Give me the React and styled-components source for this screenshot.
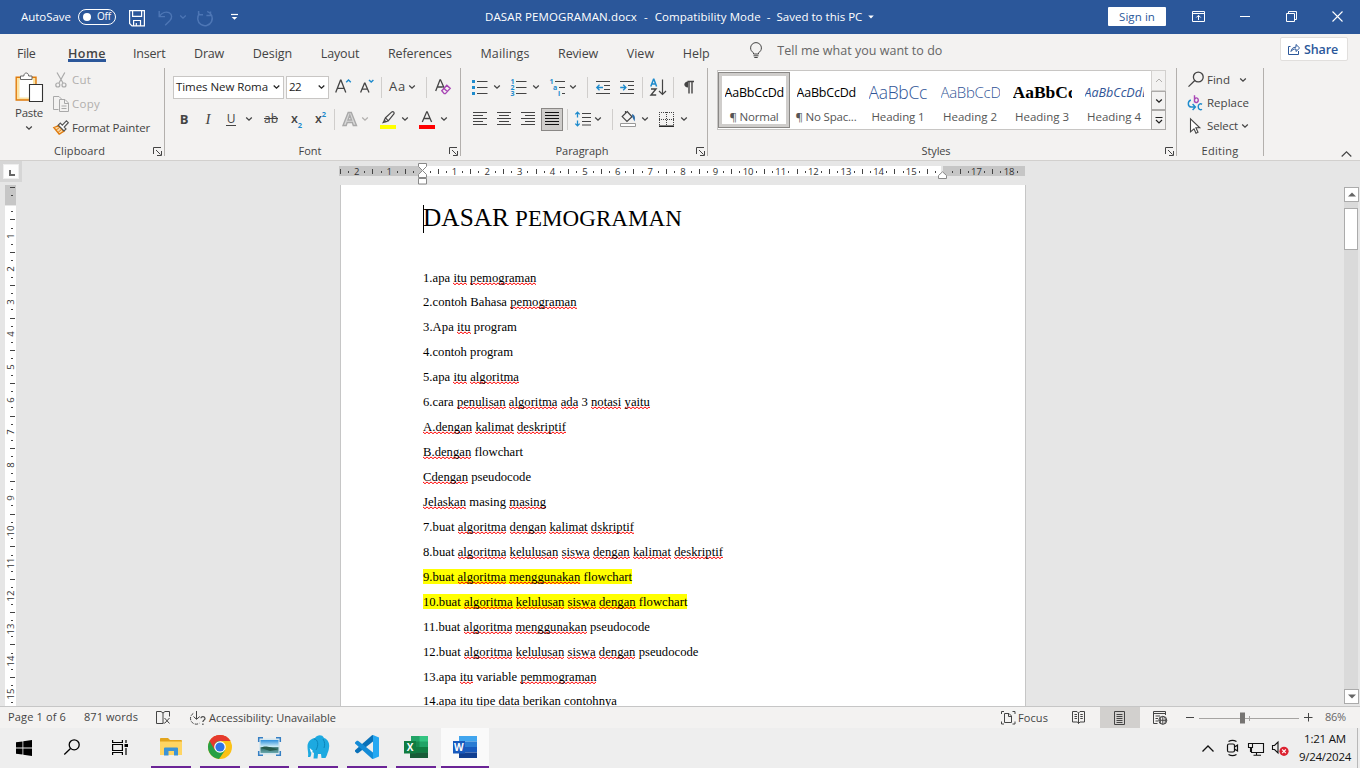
import React, { useLayoutEffect, useRef } from "react";
import styled, { createGlobalStyle, css } from "styled-components";

const Global = createGlobalStyle`
  *, *::before, *::after { box-sizing: border-box; }
  body { margin: 0; overflow: hidden; background: #e6e6e6; }
  #root { font-family: "Open Sans", "Noto Sans", sans-serif; color: #444; }
`;

const INK = "#444444";
const BLUE = "#2b579a";
const SKY = "#1e8bcd";

/* ---------- text ---------- */
const Run = styled.span`
  display: inline-block;
  flex: none;
  white-space: pre;
  line-height: 1.36;
  font-size: ${(p) => p.$size || 11.5}px;
  font-weight: ${(p) => p.$weight || 400};
  color: ${(p) => p.$color || "inherit"};
  margin-left: ${(p) => p.$ml || 0}px;
  margin-top: ${(p) => p.$mt || 0}px;
`;

/* Tracks its letters so that the run takes the given width. */
function Text({ w, children, ...rest }) {
  const ref = useRef(null);
  useLayoutEffect(() => {
    const el = ref.current;
    if (!w || !el) return;
    el.style.letterSpacing = "0px";
    const natural = el.getBoundingClientRect().width;
    el.style.letterSpacing = (w - natural) / el.textContent.length + "px";
  }, [w, children]);
  return <Run ref={ref} {...rest}>{children}</Run>;
}

/* ---------- shell ---------- */
const Window = styled.div`
  width: 1360px;
  height: 768px;
  display: flex;
  flex-direction: column;
  overflow: hidden;
`;
const Svg = styled.svg`
  display: block;
  flex: none;
  overflow: visible;
  margin-left: ${(p) => p.$ml || 0}px;
  margin-top: ${(p) => p.$mt || 0}px;
`;
function Icon({ w = 16, h = 16, children, ml, mt, ...rest }) {
  return (
    <Svg width={w} height={h} viewBox={`0 0 ${w} ${h}`} fill="none" stroke={INK} $ml={ml} $mt={mt} {...rest}>
      {children}
    </Svg>
  );
}
const Chevron = ({ ml, color = INK, w = 14, mt }) => (
  <Icon w={w} h={8} ml={ml} mt={mt} stroke={color} strokeWidth="1.3">
    <path d={`M${w / 2 - 2.8} 2.6L${w / 2} 5.2L${w / 2 + 2.8} 2.6`} />
  </Icon>
);

/* ---------- title bar ---------- */
const TitleBar = styled.header`
  height: 34px;
  flex: none;
  display: flex;
  align-items: center;
  background: ${BLUE};
  color: #fff;
`;
const TitleLeft = styled.div`
  width: 485px;
  display: flex;
  align-items: center;
  padding-left: 21px;
  height: 33px;
`;
const Toggle = styled.div`
  width: 38px;
  height: 16px;
  margin-left: 7px;
  border: 1px solid #fff;
  border-radius: 8px;
  display: flex;
  align-items: center;
  padding-left: 4px;
`;
const Knob = styled.i`
  width: 8px;
  height: 8px;
  border-radius: 50%;
  background: #fff;
`;
const TitleText = styled.div`
  flex: 1;
  display: flex;
  align-items: center;
  height: 33px;
`;
const SignIn = styled.button`
  width: 58px;
  height: 19px;
  margin: 0 26px 1px 0;
  padding: 0;
  border: 0;
  border-radius: 1px;
  background: #fff;
  color: ${BLUE};
  font: inherit;
  display: flex;
  align-items: center;
  justify-content: center;
`;
const WindowButtons = styled.div`
  display: flex;
  align-items: center;
  width: 168px;
`;

function TitleBarView() {
  return (
    <TitleBar>
      <TitleLeft>
        <Text w={50}>AutoSave</Text>
        <Toggle><Knob /><Text w={14} $size={10} $ml={6}>Off</Text></Toggle>
        <Icon w={16} h={17} ml={13} mt={2} stroke="#fff" strokeWidth="1.2">
          <path d="M.6 .6H15.4V15.9H3L.6 13.5Z M3.6 .6V6.4H12.6V.6 M4.6 15.9V10.5H11.5V15.9 M7.3 13V16" />
        </Icon>
        <Icon ml={13} mt={1} stroke="#4d76b5" strokeWidth="1.4">
          <path d="M1.2 1V6.6H7 M1.4 6.4C4 2.5 8 1.4 11 2.7C14.4 4.3 14.2 8 12 10.4L7.2 15.2" />
        </Icon>
        <Chevron ml={2} color="#4d76b5" />
        <Icon w={17} ml={7} mt={1} stroke="#4d76b5" strokeWidth="1.5">
          <path d="M2.6 3.4A7.3 7.3 0 1 0 10.2 1.4 M1.6 1V4.8H6 M13.5 1.4V5.5H9.4" />
        </Icon>
        <Icon w={9} h={8} ml={16} stroke="#fff" strokeWidth="1.2">
          <path d="M1 1.5H8" /><path d="M1.7 4H7.3L4.5 6.8Z" fill="#fff" stroke="none" />
        </Icon>
      </TitleLeft>
      <TitleText>
        <Text w={152}>DASAR PEMOGRAMAN.docx</Text>
        <Text $ml={7}>-</Text>
        <Text w={106} $ml={7}>Compatibility Mode</Text>
        <Text $ml={6}>-</Text>
        <Text w={86} $ml={6}>Saved to this PC</Text>
        <Icon w={6} h={4} ml={6} stroke="none" fill="#fff"><path d="M.2 .5H5.8L3 3.4Z" /></Icon>
      </TitleText>
      <SignIn><Text w={36}>Sign in</Text></SignIn>
      <WindowButtons>
        <Icon w={13} h={11} stroke="#fff" mt={-1}>
          <path d="M.5 .5H12.5V10.5H.5Z M.5 2.5H12.5 M6.5 9V4.5 M4.3 6.5L6.5 4.3L8.7 6.5" />
        </Icon>
        <Icon w={10} h={3} ml={35} mt={-1} stroke="#fff"><path d="M0 1.5H10" /></Icon>
        <Icon w={11} h={11} ml={36} mt={-1} stroke="#fff">
          <path d="M.5 2.5H8.5V10.5H.5Z M2.5 2.5V.5H10.5V8.5H8.5" />
        </Icon>
        <Icon w={11} h={11} ml={35} mt={-1} stroke="#fff" strokeWidth="1.1"><path d="M.5 .5L10.5 10.5M10.5 .5L.5 10.5" /></Icon>
      </WindowButtons>
    </TitleBar>
  );
}

/* ---------- tabs ---------- */
const TabBar = styled.nav`
  height: 34px;
  flex: none;
  display: flex;
  align-items: flex-start;
  padding-left: 17px;
  background: #f3f2f1;
`;
const Tab = styled.div`
  height: 28px;
  margin-right: ${(p) => p.$gap || 28.6}px;
  padding-top: 7px;
  border-bottom: 3px solid ${(p) => (p.$active ? BLUE : "transparent")};
`;
const TellMe = styled.div`
  flex: 1;
  display: flex;
  align-items: center;
  height: 32px;
  padding-left: 12px;
`;
const Share = styled.button`
  width: 68px;
  height: 24px;
  margin: 3px 12px 0 0;
  padding: 0 0 0 7px;
  display: flex;
  align-items: center;
  border: 1px solid #e1dfdd;
  border-radius: 2px;
  background: #fff;
  font: inherit;
  color: ${BLUE};
`;
const TABS = [
  ["File", 18.5, 32.5], ["Home", 38, 27], ["Insert", 32.5], ["Draw", 30], ["Design", 39.5], ["Layout", 38.5],
  ["References", 64], ["Mailings", 49], ["Review", 40], ["View", 27.5], ["Help", 27],
];

function Tabs() {
  return (
    <TabBar>
      {TABS.map(([t, w, gap]) => (
        <Tab key={t} $gap={gap} $active={t === "Home"}>
          <Text w={w} $size={12.5} $weight={t === "Home" ? 600 : 400}>{t}</Text>
        </Tab>
      ))}
      <TellMe>
        <Icon w={12} h={16}>
          <path d="M3.5 12V10.8C1.5 9.5 .6 8 .6 5.9A5.4 5.3 0 0 1 11.4 5.9C11.4 8 10.5 9.5 8.5 10.8V12Z M3.5 13.8H8.5 M4.3 15.5H7.7" />
        </Icon>
        <Text w={165} $size={12.5} $ml={15} $color="#666">Tell me what you want to do</Text>
      </TellMe>
      <Share>
        <Icon w={12} h={12} stroke={BLUE}>
          <path d="M2.5 3.5H.5V11.5H10.5V8 M3 8.5C3.3 5.8 5 4.2 8 4.2V1.5L11.6 5L8 8.5V6C5.6 6 4.2 6.6 3 8.5Z" />
        </Icon>
        <Text w={34} $size={12.5} $weight={600} $ml={4}>Share</Text>
      </Share>
    </TabBar>
  );
}

/* ---------- ribbon ---------- */
const Ribbon = styled.section`
  height: 93px;
  flex: none;
  display: flex;
  background: #f3f2f1;
  border-bottom: 1px solid #d2d0ce;
`;
const GroupBox = styled.div`
  width: ${(p) => p.$w}px;
  height: 88px;
  flex: none;
  display: flex;
  flex-direction: column;
  border-right: 1px solid #b3b0ad;
`;
const GroupBody = styled.div`
  height: 76px;
  flex: none;
`;
const GroupFooter = styled.div`
  height: 16px;
  display: flex;
  align-items: center;
  justify-content: center;
  padding-left: ${(p) => (p.$launcher ? 11 : 0)}px;
`;
const FooterTitle = styled.div`
  flex: 1;
  display: flex;
  justify-content: center;
  padding-right: ${(p) => p.$shift || 0}px;
`;
function Group({ w, title, tw, launcher = true, shift, children }) {
  return (
    <GroupBox $w={w}>
      <GroupBody>{children}</GroupBody>
      <GroupFooter $launcher={launcher}>
        <FooterTitle $shift={shift}><Text w={tw} $size={11}>{title}</Text></FooterTitle>
        {launcher && (
          <Icon w={9} h={9} mt={0} style={undefined}>
            <path d="M.5 7V.5H8 M3 3L7.5 7.5 M8.5 4V8.5H4" />
          </Icon>
        )}
        {launcher && <LauncherGap />}
      </GroupFooter>
    </GroupBox>
  );
}
const LauncherGap = styled.i`
  width: 2px;
`;
const ToolRow = styled.div`
  display: flex;
  align-items: center;
  height: ${(p) => p.$h || 24}px;
  margin-top: ${(p) => p.$mt || 0}px;
  padding-left: ${(p) => p.$pl || 0}px;
`;
const Cell = styled.div`
  width: ${(p) => p.$w}px;
  height: 20px;
  flex: none;
  margin-left: ${(p) => p.$ml || 0}px;
  display: flex;
  align-items: center;
  justify-content: center;
`;
const Divider = styled.i`
  width: 1px;
  height: 21px;
  flex: none;
  margin-left: ${(p) => p.$ml || 0}px;
  background: #d0cecc;
`;
const Combo = styled.div`
  width: ${(p) => p.$w}px;
  height: 23px;
  flex: none;
  margin-left: ${(p) => p.$ml || 0}px;
  display: flex;
  align-items: center;
  justify-content: space-between;
  padding-left: 2px;
  border: 1px solid #c8c6c4;
  background: #fff;
  color: #222;
`;
const ClipRow = styled.div`
  display: flex;
`;
const PasteButton = styled.div`
  width: 53px;
  display: flex;
  flex-direction: column;
  align-items: center;
  padding: 4px 0 0 5px;
`;
const ClipList = styled.div`
  display: flex;
  flex-direction: column;
`;
const ClipItem = styled.div`
  height: 24px;
  display: flex;
  align-items: center;
  color: ${(p) => (p.$off ? "#b1afad" : INK)};
`;

function Clipboard() {
  return (
    <Group w={165} title="Clipboard" tw={51} shift={5}>
      <ClipRow>
        <PasteButton>
          <Icon w={28} h={31}>
            <path d="M1.2 5.2H21V28H1.2Z" fill="#fbe3a4" stroke="#e07b0c" strokeWidth="1.4" />
            <path d="M4.5 7.5H18V25.5H4.5Z" fill="#fff" stroke="none" />
            <path d="M5.5 7.5V4H8.8C9 0 13.5 0 13.7 4H17V7.5Z" fill="#fff" stroke="#666" />
            <path d="M14.5 12.5H27.5V29.5H14.5Z" fill="#fff" stroke="#333" strokeWidth="1.1" />
          </Icon>
          <Text w={28} $mt={2}>Paste</Text>
          <Chevron mt={3} />
        </PasteButton>
        <ClipList>
          <ClipItem $off>
            <Icon ml={0} stroke="#aaa" strokeWidth="1.2">
              <path d="M4 .5L10 11 M11.8 .5L6 11" />
              <circle cx="4.8" cy="13" r="2" /><circle cx="11" cy="13" r="2" />
            </Icon>
            <Text w={19} $ml={3}>Cut</Text>
          </ClipItem>
          <ClipItem $off>
            <Icon stroke="#a9a9a9">
              <path d="M5.5 13.5H.5V.5H6L8.5 3 M6.5 3.5H12L15.5 7V15.5H6.5Z M11.5 3.5V7.5H15.5 M8.5 10H13.5 M8.5 12.5H13.5" />
            </Icon>
            <Text w={28} $ml={3}>Copy</Text>
          </ClipItem>
          <ClipItem>
            <Icon>
              <path d="M.8 7.5L6.2 14.2C8 13.5 9 12 10.8 11.3L5.5 5.3C4 6.5 2.5 7 .8 7.5Z" fill="#f7d7a8" stroke="#e07b0c" strokeWidth="1.3" />
              <path d="M3 10.2L7 7 M5 12.5L8.5 9.3" stroke="#e07b0c" />
              <path d="M5.3 5.2L7.3 3.2L9.3 5.2L13.4 .8L15.3 2.7L11.2 7.1L13 9L11 11Z" fill="#fff" stroke="#555" strokeWidth="1.2" />
            </Icon>
            <Text w={78} $ml={3}>Format Painter</Text>
          </ClipItem>
        </ClipList>
      </ClipRow>
    </Group>
  );
}

const Letter = styled.span`
  font-size: ${(p) => p.$size || 13}px;
  line-height: 1;
  font-weight: ${(p) => p.$weight || 400};
  font-style: ${(p) => (p.$italic ? "italic" : "normal")};
  font-family: ${(p) => (p.$serif ? '"Liberation Serif", serif' : "inherit")};
  color: ${(p) => p.$color || INK};
  ${(p) => p.$under && css`border-bottom: 1px solid ${INK}; padding: 0 1px;`}
  ${(p) => p.$strike && css`text-decoration: line-through;`}
`;
const Script = styled.span`
  align-self: ${(p) => (p.$low ? "flex-end" : "flex-start")};
  margin-top: ${(p) => (p.$low ? 0 : 1)}px;
  font-size: 7.5px;
  line-height: 8px;
  font-weight: 700;
  color: ${SKY};
`;
const ColorStack = styled.div`
  width: 16px;
  height: 18px;
  flex: none;
  display: flex;
  flex-direction: column;
  align-items: center;
  justify-content: space-between;
  border-bottom: 4px solid ${(p) => p.$color};
  margin-left: ${(p) => p.$ml || 0}px;
  margin-top: 1px;
`;

function FontGroup() {
  return (
    <Group w={296} title="Font" tw={23} shift={5}>
      <ToolRow $mt={7} $h={24} $pl={8}>
        <Combo $w={111}><Text w={92}>Times New Roma</Text><Chevron w={13} color="#222" /></Combo>
        <Combo $w={43} $ml={2}><Text w={12}>22</Text><Chevron w={13} color="#222" /></Combo>
        <Icon ml={6}>
          <path d="M.7 13.5L5.5 1.2H6L10.8 13.5 M2.4 9.3H9.1" strokeWidth="1.3" />
          <path d="M11.2 3.2L13.5 .9L15.8 3.2" stroke={SKY} strokeWidth="1.4" />
        </Icon>
        <Icon w={14} ml={9}>
          <path d="M.6 13.5L4.5 4.2H5L9 13.5 M2 10.2H7.5" strokeWidth="1.3" />
          <path d="M9 .9L11.2 3.1L13.4 .9" stroke={SKY} strokeWidth="1.4" />
        </Icon>
        <Divider $ml={7} />
        <Text w={17} $size={13} $ml={7}>Aa</Text>
        <Chevron ml={-1} />
        <Divider $ml={7} />
        <Icon ml={8}>
          <path d="M.7 12L5 .8H5.5L9.6 10 M2.3 8H7.8" strokeWidth="1.3" />
          <path d="M6.8 11.8L11.8 6.2L15.2 9.4L10.4 14.6H9.2Z M9 9.4L12.4 12.6" stroke="#a846b5" strokeWidth="1.4" fill="#f3f2f1" />
        </Icon>
      </ToolRow>
      <ToolRow $mt={8} $h={24} $pl={7}>
        <Cell $w={24}><Letter $weight={700}>B</Letter></Cell>
        <Cell $w={24}><Letter $italic $serif $size={15}>I</Letter></Cell>
        <Cell $w={22}><Letter $under $size={12}>U</Letter></Cell>
        <Chevron />
        <Cell $w={30}><Letter $strike $size={12}>ab</Letter></Cell>
        <Cell $w={21}><Letter $weight={600} $size={12.5}>x</Letter><Script $low>2</Script></Cell>
        <Cell $w={27}><Letter $weight={600} $size={12.5}>x</Letter><Script>2</Script></Cell>
        <Divider />
        <Icon ml={7}>
          <path d="M1 14.5L6.2 1.5H9.3L14.5 14.5H11.3L10.3 11.5H5.2L4.2 14.5Z M6 9H9.5L7.8 4Z" stroke="#a9a9a9" strokeWidth="1.4" fill="#d8d8d8" />
        </Icon>
        <Chevron color="#b1afad" />
        <ColorStack $color="#ffff00" $ml={8}>
          <Icon h={13}>
            <path d="M5.5 6.8L11.8 .9C13.3 0 14.8 1.6 13.9 3L8.3 9.8Z M5.5 6.8L4.3 9.2L6 10.8L8.3 9.8" strokeWidth="1.2" />
            <path d="M3.8 9.2L6 11.3L2 12.6Z" fill={INK} stroke="none" />
          </Icon>
        </ColorStack>
        <Chevron ml={2} />
        <ColorStack $color="#ff0000" $ml={7}>
          <Icon h={13}><path d="M3.3 11L7.7 .8H8.2L12.6 11 M4.8 7.5H11.1" strokeWidth="1.3" /></Icon>
        </ColorStack>
        <Chevron ml={2} />
      </ToolRow>
    </Group>
  );
}

const Tiny = styled.text`
  font: 700 7px "Open Sans", sans-serif;
  fill: ${SKY};
  stroke: none;
`;
const JustifyButton = styled.div`
  width: 22px;
  height: 23px;
  flex: none;
  margin-left: 5px;
  display: flex;
  align-items: center;
  justify-content: center;
  border: 1px solid #8a8886;
  background: #cfcdcb;
`;

function Paragraph() {
  return (
    <Group w={247} title="Paragraph" tw={53} shift={4}>
      <ToolRow $mt={7} $h={24}>
        <Icon ml={11}>
          <path d="M5 2.5H15.5M5 8.5H15.5M5 14.5H15.5" />
          <path d="M0 1H3V4H0ZM0 7H3V10H0ZM0 13H3V16H0Z" fill={SKY} stroke="none" />
        </Icon>
        <Chevron ml={2} />
        <Icon ml={7}>
          <path d="M5 2.5H15.5M5 8.5H15.5M5 14.5H15.5" />
          <Tiny x="-.5" y="5">1</Tiny><Tiny x="-.5" y="11">2</Tiny><Tiny x="-.5" y="17">3</Tiny>
        </Icon>
        <Chevron ml={2} />
        <Icon ml={7}>
          <path d="M5 2.5H15M9 8.5H15M12 14.5H15" />
          <Tiny x="-.5" y="5">1</Tiny><Tiny x="3" y="11">a</Tiny><Tiny x="8" y="17">i</Tiny>
        </Icon>
        <Chevron />
        <Divider $ml={7} />
        <Icon w={15} ml={8}>
          <path d="M0 2.5H14M8 6.5H14M8 10.5H14M0 14.5H14" />
          <path d="M.8 8.5H7M3.5 5.8L.8 8.5L3.5 11.2" stroke={SKY} strokeWidth="1.3" />
        </Icon>
        <Icon w={15} ml={9}>
          <path d="M0 2.5H14M8 6.5H14M8 10.5H14M0 14.5H14" />
          <path d="M.2 8.5H6M3.2 5.8L5.9 8.5L3.2 11.2" stroke={SKY} strokeWidth="1.3" />
        </Icon>
        <Divider $ml={7} />
        <Icon w={17} h={18} ml={7}>
          <path d="M.8 8.5L3.5 1.2H3.9L6.6 8.5M1.9 6H5.6" stroke={SKY} strokeWidth="1.5" />
          <path d="M1 11H6L1 17H6.2" strokeWidth="1.4" />
          <path d="M12.5 1.5V16.5M9 13L12.5 16.5L16 13" strokeWidth="1.2" />
        </Icon>
        <Divider $ml={6} />
        <Icon w={12} h={14} ml={9}>
          <path d="M5.5 7.5C0 7.8 0 1.5 5 1.5V7.5Z" fill={INK} stroke="none" />
          <path d="M4.5 1.5H11M6 1.5V13.5M9 1.5V13.5" strokeWidth="1.4" />
        </Icon>
      </ToolRow>
      <ToolRow $mt={8} $h={24}>
        <Icon ml={11}><path d="M1 1.5H15M1 4.5H11M1 7.5H15M1 10.5H11M1 13.5H15" /></Icon>
        <Icon ml={8}><path d="M1 1.5H15M3 4.5H13M1 7.5H15M3 10.5H13M1 13.5H15" /></Icon>
        <Icon ml={8}><path d="M1 1.5H15M5 4.5H15M1 7.5H15M5 10.5H15M1 13.5H15" /></Icon>
        <JustifyButton>
          <Icon stroke="#111"><path d="M1 1.5H15M1 4.5H15M1 7.5H15M1 10.5H15M1 13.5H15" /></Icon>
        </JustifyButton>
        <Divider $ml={4} />
        <Icon w={17} ml={7}>
          <path d="M7 2.5H16M7 6.5H16M7 10.5H16M7 14H16" />
          <path d="M2.5 1V6.5M.3 3.4L2.5 1.2L4.7 3.4M2.5 9.5V15M.3 12.6L2.5 14.8L4.7 12.6" stroke={SKY} strokeWidth="1.3" />
        </Icon>
        <Chevron ml={-1} />
        <Divider $ml={7} />
        <Icon ml={7} h={18}>
          <path d="M7.2 1.5L12 6.8L7 11.5L2.2 6.6Z M5.5 3.2V.9" strokeWidth="1.2" />
          <path d="M12 4C15.5 5 15.2 8.5 14.5 11.5L12.3 7Z" fill="#2b6ca8" stroke="none" />
          <path d="M.5 13.5H15.5V16.5H.5Z" fill="#fff" stroke="#999" />
        </Icon>
        <Chevron ml={2} />
        <Icon ml={6}>
          <path d="M1.5 1V14M15.5 1V14M8.5 1V14M1 1.5H16M1 8.5H16" strokeDasharray="1 1" />
          <path d="M1 15.2H16" stroke="#111" strokeWidth="1.4" />
        </Icon>
        <Chevron ml={3} />
      </ToolRow>
    </Group>
  );
}

const Gallery = styled.div`
  width: 449px;
  height: 60px;
  margin: 2px 0 0 9px;
  display: flex;
  border: 1px solid #c8c6c4;
  background: #fff;
`;
const StyleCard = styled.div`
  width: 72px;
  height: 56px;
  margin-top: 1px;
  flex: none;
  display: flex;
  flex-direction: column;
  align-items: center;
  padding-top: ${(p) => (p.$active ? 6 : 10)}px;
  ${(p) => p.$active && css`
    border: 1px solid #8a8886;
    box-shadow: inset 0 0 0 3px #cfcdcb;
    padding-top: 9px;
  `}
`;
const Sample = styled.div`
  width: 59px;
  height: 21px;
  overflow: hidden;
  white-space: nowrap;
  line-height: 21px;
  font-size: ${(p) => p.$size}px;
  letter-spacing: ${(p) => p.$track || 0}px;
  font-family: ${(p) => (p.$serif ? '"Liberation Serif", serif' : '"Open Sans", sans-serif')};
  font-weight: ${(p) => p.$weight || 400};
  font-style: ${(p) => (p.$italic ? "italic" : "normal")};
  color: ${(p) => p.$color || "#000"};
`;
const GalleryScroll = styled.div`
  width: 15px;
  margin: -1px -1px -1px auto;
  display: flex;
  flex-direction: column;
  background: #f3f2f1;
`;
const ScrollCell = styled.div`
  height: ${(p) => p.$h}px;
  display: flex;
  align-items: center;
  justify-content: center;
  border: 1px solid ${(p) => (p.$off ? "#d2d0ce" : "#acaaa8")};
`;
const STYLES = [
  { label: "¶ Normal", w: 49, size: 12.5, track: -0.2, active: true },
  { label: "¶ No Spac...", w: 61, size: 12.5, track: -0.2 },
  { label: "Heading 1", w: 53, size: 17.5, color: "#2f5496", track: -0.3, weight: 300 },
  { label: "Heading 2", w: 54, size: 15, color: "#2f5496", track: -0.3, weight: 300 },
  { label: "Heading 3", w: 54, size: 17.5, serif: true, weight: 700 },
  { label: "Heading 4", w: 54, size: 12.5, italic: true, color: "#2f5496", track: 0, weight: 400 },
];

function Styles() {
  return (
    <Group w={469} title="Styles" tw={29} shift={12}>
      <Gallery>
        {STYLES.map((s) => (
          <StyleCard key={s.label} $active={s.active}>
            <Sample $size={s.size} $color={s.color} $serif={s.serif} $weight={s.weight} $italic={s.italic} $track={s.track}>AaBbCcDdEe</Sample>
            <Text w={s.w} $mt={6} $color="#555">{s.label}</Text>
          </StyleCard>
        ))}
        <GalleryScroll>
          <ScrollCell $h={21} $off>
            <Icon w={8} h={5} stroke="#b1afad"><path d="M1 4L4 1L7 4" /></Icon>
          </ScrollCell>
          <ScrollCell $h={19}><Chevron color="#222" /></ScrollCell>
          <ScrollCell $h={20}>
            <Icon w={8} h={8} stroke="#222" strokeWidth="1.2"><path d="M.5 1.5H7.5 M1 4L4 7L7 4" /></Icon>
          </ScrollCell>
        </GalleryScroll>
      </Gallery>
    </Group>
  );
}

const EditRow = styled.div`
  height: 23px;
  display: flex;
  align-items: center;
  padding-left: 10px;
`;
const Collapse = styled.div`
  flex: 1;
  display: flex;
  justify-content: flex-end;
  align-items: flex-end;
  padding: 0 8px 3px 0;
`;

function Editing() {
  return (
    <Group w={87} title="Editing" tw={37} launcher={false}>
      <EditRow>
        <Icon w={17} mt={-2} strokeWidth="1.3"><circle cx="11.3" cy="6" r="4.9" /><path d="M7.8 9.5L1.5 15.6" /></Icon>
        <Text w={23} $ml={3}>Find</Text>
        <Chevron ml={6} />
      </EditRow>
      <EditRow>
        <Icon w={17} strokeWidth="1.4">
          <path d="M7.5 0V7.3 M7.5 4.6A1.9 2.3 0 1 1 7.5 5.2" stroke="#a846b5" transform="translate(0 .3)" />
          <path d="M15 9.4C13.5 8.2 11.2 9 11.2 11.8C11.2 14.6 13.6 15.3 15 14.2" stroke={SKY} />
          <path d="M3.8 5C.4 6.5 .5 11.5 4 12H8 M5.6 9L8.4 12L5.6 15" stroke={SKY} />
        </Icon>
        <Text w={42} $ml={3}>Replace</Text>
      </EditRow>
      <EditRow>
        <Icon w={17} strokeWidth="1.1">
          <path d="M3.5 .8L12.8 9.8H8.9L11 14.3L9 15.2L7 10.8L3.5 13.8Z" fill="#fff" />
        </Icon>
        <Text w={31} $ml={3}>Select</Text>
        <Chevron ml={0} />
      </EditRow>
    </Group>
  );
}

/* ---------- document area ---------- */
const Workspace = styled.main`
  height: 545px;
  flex: none;
  display: flex;
  background: #e6e6e6;
  overflow: hidden;
`;
const SideRulerColumn = styled.div`
  width: 22px;
  flex: none;
`;
const TabSelector = styled.div`
  width: 22px;
  height: 21px;
  margin-bottom: 3px;
  display: flex;
  align-items: center;
  justify-content: center;
  background: #d6d6d6;
`;
const TabSelectorFace = styled.div`
  width: 16px;
  height: 15px;
  display: flex;
  align-items: center;
  justify-content: center;
  border: 1px solid #eee;
  background: #fdfdfd;
`;
const VRuler = styled.div`
  width: 11px;
  height: 521px;
  margin-left: 5px;
  overflow: hidden;
  background: linear-gradient(#c6c6c6 20px, #e6e6e6 20px 21px, #fff 21px);
`;
const VTrack = styled.div`
  margin-top: -1.8px;
`;
const VSlot = styled.div`
  height: 8.18px;
  display: flex;
  align-items: center;
  justify-content: flex-end;
  padding-right: 1px;
`;
const VNumber = styled.span`
  width: 8px;
  line-height: 8px;
  font-size: 9.5px;
  color: #333;
  display: flex;
  justify-content: center;
  transform: rotate(-90deg);
`;
const Mark = styled.i`
  flex: none;
  background: #444;
  width: ${(p) => p.$w}px;
  height: ${(p) => p.$h}px;
  margin-right: ${(p) => p.$mr || 0}px;
`;
const Canvas = styled.div`
  flex: 1;
  display: flex;
  flex-direction: column;
  padding-left: 317px;
`;
const HRulerWrap = styled.div`
  position: relative;
  width: 686px;
  height: 24px;
  padding-top: 5px;
  flex: none;
`;
const HRuler = styled.div`
  height: 10px;
  overflow: hidden;
  background: linear-gradient(90deg, #c6c6c6 83px, #fff 83px 602px, #e6e6e6 602px 604px, #c6c6c6 604px);
`;
const HTrack = styled.div`
  display: flex;
  align-items: center;
  height: 11px;
  width: 720px;
  margin-left: -2.8px;
`;
const HSlot = styled.div`
  width: 8.17px;
  flex: none;
  display: flex;
  align-items: center;
  justify-content: center;
  font-size: 9.5px;
  line-height: 10px;
  color: #333;
`;
const Marker = styled.div`
  position: absolute;
  left: ${(p) => p.$x}px;
  top: ${(p) => p.$y}px;
`;
const Page = styled.article`
  width: 686px;
  height: 521px;
  margin-left: 1px;
  padding: 15px 0 0 82px;
  border: solid #c6c6c6;
  border-width: 0 1px;
  background: #fff;
  font-family: "Liberation Serif", "Times New Roman", serif;
  color: #000;
  overflow: hidden;
`;
const Heading = styled.h1`
  height: 65.5px;
  margin: 0;
  display: flex;
  align-items: baseline;
  font-weight: 400;
`;
const Caret = styled.i`
  width: 1px;
  height: 28px;
  align-self: flex-start;
  margin-top: 5px;
  background: #000;
`;
const Paragraphs = styled.div`
  font-size: 12.65px;
`;
const Para = styled.p`
  margin: 0;
  height: 24.94px;
  line-height: 24.94px;
  white-space: nowrap;
`;
const ParaRun = styled.span`
  ${(p) => p.$mark && css`background: #ff0; padding-top: 1px;`}
`;
const wave = "url(\"data:image/svg+xml,%3Csvg xmlns='http://www.w3.org/2000/svg' width='4' height='3'%3E%3Cpath d='M-.5 .5L2 2.7L4.5 .5' fill='none' stroke='%23f00' stroke-width='1'/%3E%3C/svg%3E\")";
const Typo = styled.span`
  background: ${wave} repeat-x left bottom / 4px 3px;
`;
const PARAS = [
  [113.5, "1.apa ~itu~ ~pemograman~"],
  [153.5, "2.contoh Bahasa ~pemograman~"],
  [94, "3.Apa ~itu~ program"],
  [90, "4.contoh program"],
  [96, "5.apa ~itu~ ~algoritma~"],
  [227, "6.cara ~penulisan~ ~algoritma~ ~ada~ 3 ~notasi~ ~yaitu~"],
  [143, "~A.dengan~ ~kalimat~ ~deskriptif~"],
  [100, "~B.dengan~ flowchart"],
  [108, "~Cdengan~ pseudocode"],
  [123, "~Jelaskan~ masing ~masing~"],
  [211, "7.buat ~algoritma~ ~dengan~ ~kalimat~ ~dskriptif~"],
  [300, "8.buat ~algoritma~ ~kelulusan~ ~siswa~ ~dengan~ ~kalimat~ ~deskriptif~"],
  [209, "9.buat ~algoritma~ ~menggunakan~ flowchart", true],
  [264.5, "10.buat ~algoritma~ ~kelulusan~ ~siswa~ ~dengan~ flowchart", true],
  [227, "11.buat ~algoritma~ ~menggunakan~ pseudocode"],
  [275.5, "12.buat ~algoritma~ ~kelulusan~ ~siswa~ ~dengan~ pseudocode"],
  [173.5, "13.apa ~itu~ variable ~pemmograman~"],
  [194, "14.apa itu tipe data berikan contohnya"],
];

function Line({ w, source, mark }) {
  const ref = useRef(null);
  useLayoutEffect(() => {
    const el = ref.current;
    el.style.letterSpacing = "0px";
    el.style.letterSpacing = (w - el.getBoundingClientRect().width) / el.textContent.length + "px";
  }, [w]);
  return (
    <Para>
      <ParaRun ref={ref} $mark={mark}>
        {source.split("~").map((t, i) => (i % 2 ? <Typo key={i}>{t}</Typo> : t))}
      </ParaRun>
    </Para>
  );
}

const slots = (from, to) => {
  const out = [];
  for (let q = from * 4; q <= to * 4; q++) out.push(q);
  return out;
};

const ScrollColumn = styled.div`
  width: 16px;
  flex: none;
  padding: 26px 2px 2px 0;
  display: flex;
  flex-direction: column;
`;
const Track = styled.div`
  flex: 1;
  padding-top: 6px;
  background: #dadada;
`;
const Thumb = styled.div`
  height: 42px;
  border: 1px solid #ababab;
  background: #fff;
`;
const ArrowButton = styled.div`
  width: 15px;
  height: 15px;
  flex: none;
  display: flex;
  align-items: center;
  justify-content: center;
  border: 1px solid #ababab;
  background: #fff;
`;

function Document() {
  return (
    <Workspace>
      <SideRulerColumn>
        <TabSelector><TabSelectorFace>
          <Icon w={6} h={6} ml={1} mt={2} stroke="#666" strokeWidth="2"><path d="M1 0V5H6" /></Icon>
        </TabSelectorFace></TabSelector>
        <VRuler><VTrack>
          {slots(-0.5, 15.25).map((q) => (
            <VSlot key={q}>
              {q === 0 ? null : q % 4 === 0 ? <VNumber>{q / 4}</VNumber> : q % 2 === 0 ? <Mark $w={5} $h={1} /> : <Mark $w={2} $h={1} $mr={2} />}
            </VSlot>
          ))}
        </VTrack></VRuler>
      </SideRulerColumn>
      <Canvas>
        <HRulerWrap>
          <HRuler><HTrack>
            {slots(-2.5, 18.25).map((q) => (
              <HSlot key={q}>
                {q === 0 || q === 64 ? null : q % 4 === 0 ? Math.abs(q / 4) : q % 2 === 0 ? <Mark $w={1} $h={5} /> : <Mark $w={1} $h={2} />}
              </HSlot>
            ))}
          </HTrack></HRuler>
          <Marker $x={79} $y={2}>
            <Icon w={9} h={22} stroke="#888">
              <path d="M.5 .5H8.5V3.5L4.5 7.5L.5 3.5Z M4.5 7.5L8.5 11.5V14.5H.5V11.5Z M.5 15.5H8.5V21H.5Z" fill="#fff" />
            </Icon>
          </Marker>
          <Marker $x={599} $y={10}>
            <Icon w={9} h={8} stroke="#888"><path d="M.5 7.5V4.5L4.5 .8L8.5 4.5V7.5Z" fill="#fff" /></Icon>
          </Marker>
        </HRulerWrap>
        <Page>
          <Heading>
            <Caret />
            <Text w={86} $size={25.3} $ml={-1}>DASAR</Text>
            <Text w={167} $size={23} $ml={6}>PEMOGRAMAN</Text>
          </Heading>
          <Paragraphs>
            {PARAS.map(([w, source, mark]) => <Line key={source} w={w} source={source} mark={mark} />)}
          </Paragraphs>
        </Page>
      </Canvas>
      <ScrollColumn>
        <ArrowButton><Icon w={8} h={5} stroke="none" fill="#666"><path d="M0 4.5L4 .5L8 4.5Z" /></Icon></ArrowButton>
        <Track><Thumb /></Track>
        <ArrowButton><Icon w={8} h={5} stroke="none" fill="#666"><path d="M0 .5L4 4.5L8 .5Z" /></Icon></ArrowButton>
      </ScrollColumn>
    </Workspace>
  );
}

/* ---------- status bar ---------- */
const StatusBar = styled.footer`
  height: 22px;
  flex: none;
  display: flex;
  align-items: center;
  padding-left: 8px;
  border-top: 1px solid #c6c6c6;
  background: #f3f2f1;
`;
const Spacer = styled.i`
  flex: 1;
`;
const ViewButton = styled.div`
  width: 40px;
  height: 21px;
  display: flex;
  align-items: center;
  justify-content: center;
  background: ${(p) => (p.$active ? "#d2d0ce" : "transparent")};
`;
const StatusEnd = styled.div`
  display: flex;
  align-items: center;
  width: 359px;
`;

function Status() {
  return (
    <StatusBar>
      <Text w={58} $size={11}>Page 1 of 6</Text>
      <Text w={54} $size={11} $ml={18}>871 words</Text>
      <Icon w={15} h={13} ml={18} mt={0}>
        <path d="M7 12.5H.5V.5H5L7 2V12.5L8 11.5 M7 2L9 .5H13.5V5.5 M8.5 7L13.5 12.5M13.5 7L8.5 12.5" />
      </Icon>
      <Icon ml={19} h={15} mt={1}>
        <path d="M3.3 2.4A5.8 5.8 0 1 0 9.5 12.2" strokeDasharray="3.2 1.2" /><path d="M3.5 5.5L6.5 8.3L9.8 5.5M6.5 0V8" />
        <path d="M11 7.2C11 5 15 5 15 7.4C15 9.3 12.9 9 12.9 11M12.9 12.5V14" strokeWidth="1.2" />
      </Icon>
      <Text w={127} $size={11} $ml={3} $mt={2}>Accessibility: Unavailable</Text>
      <Spacer />
      <StatusEnd>
        <Icon w={15} h={14}>
          <path d="M3 .5H.5V3M11.5 .5H14V3M.5 10.5V13H3M14 10.5V13H11.5 M3.5 2.5H8L10.5 5V11.5H3.5Z M7.5 2.5V5.5H10.5" />
        </Icon>
        <Text w={30} $size={11} $ml={2} $mt={2}>Focus</Text>
        <ViewButton style={undefined}>
          <FocusGap />
        </ViewButton>
        <Icon w={14} h={13} ml={-16}>
          <path d="M6.5 2L5 .5H.5V11H5.5L6.5 12.5L8 11H12.5V.5H8L6.5 2V12.5 M2.5 3.5H5M2.5 5.5H5M2.5 7.5H5M8.3 3.5H10.8M8.3 5.5H10.8M8.3 7.5H10.8" />
        </Icon>
        <ViewButtonPrint>
          <Icon w={12} h={14}><path d="M.5 .5H10.5V13.5H.5Z M2.5 3.5H8.5M2.5 5.5H8.5M2.5 7.5H8.5M2.5 9.5H8.5M2.5 11.5H8.5" /></Icon>
        </ViewButtonPrint>
        <Icon w={15} h={14} ml={13}>
          <path d="M4.5 12.5H.5V.5H12.5V4 M.5 2.5H12.5M2.5 5H7M2.5 7.5H5M2.5 10H5" />
          <circle cx="9.8" cy="9.3" r="4" /><path d="M5.8 9.3H13.8M9.8 5.3V13.3M8 6C7 8 7 11 8 12.8M11.6 6C12.6 8 12.6 11 11.6 12.8" />
        </Icon>
        <Icon w={8} h={3} ml={18}><path d="M0 1.5H8" /></Icon>
        <Icon w={100} h={12} ml={5}>
          <path d="M0 6.5H100M50.5 4V9" stroke="#a6a4a2" /><path d="M41 .5H46V11.5H41Z" fill="#767472" stroke="none" />
        </Icon>
        <Icon w={9} h={9} ml={5}><path d="M0 4.5H8.5M4.5 0V8.5" /></Icon>
        <Text w={21} $size={11} $ml={12} $color="#666">86%</Text>
      </StatusEnd>
    </StatusBar>
  );
}
const FocusGap = styled.i`
  width: 1px;
`;
const ViewButtonPrint = styled(ViewButton)`
  margin-left: 14px;
  background: #d2d0ce;
`;

/* ---------- taskbar ---------- */
const Taskbar = styled.div`
  height: 40px;
  flex: none;
  display: flex;
  background: #eeeeee;
  color: #111;
`;
const TaskButton = styled.div`
  width: ${(p) => p.$w || 48}px;
  height: 40px;
  flex: none;
  margin-left: ${(p) => p.$ml || 0}px;
  display: flex;
  align-items: center;
  justify-content: center;
  background: ${(p) => (p.$active ? "#fafafa" : "transparent")};
  border-bottom: 2px solid ${(p) => (p.$open ? "#6b2496" : "transparent")};
`;
const Tray = styled.div`
  width: 158px;
  display: flex;
  align-items: center;
`;
const Clock = styled.div`
  width: 52px;
  margin-left: 10px;
  display: flex;
  flex-direction: column;
  align-items: center;
`;
const DeskEdge = styled.i`
  width: 1px;
  height: 40px;
  margin-left: 6px;
  background: #b8b8b8;
`;
const AppLetter = styled.text`
  font: 700 ${(p) => p.$size || 10}px "Open Sans", sans-serif;
  fill: #fff;
  stroke: none;
`;

function TaskbarView() {
  return (
    <Taskbar>
      <TaskButton>
        <Icon w={16} h={16} stroke="none" fill="#000" mt={1}>
          <path d="M0 2.3L6.5 1.4V7.5H0Z M7.3 1.3L16 0V7.5H7.3Z M0 8.4H6.5V14.6L0 13.7Z M7.3 8.4H16V16L7.3 14.7Z" />
        </Icon>
      </TaskButton>
      <TaskButton>
        <Icon w={16} h={16} stroke="#000" strokeWidth="1.3"><circle cx="10.2" cy="5.8" r="5" /><path d="M6.5 9.5L.3 15.5" /></Icon>
      </TaskButton>
      <TaskButton>
        <Icon w={16} h={15} stroke="#000" strokeWidth="1.2">
          <path d="M.6 0V2.5H10.4V0M.6 15V12.5H10.4V15M.6 4.5H10.4V10.5H.6Z M14 0V3M14 8V15" /><path d="M12.5 4H16V7H12.5Z" fill="#000" stroke="none" />
        </Icon>
      </TaskButton>
      <TaskButton $w={40} $ml={7} $open>
        <Icon w={22} h={20} stroke="none">
          <path d="M0 1.5Q0 1 1 1H8L10 3H21Q22 3 22 4V17H0Z" fill="#e2a41c" /><path d="M0 4.5H22V18H0Z" fill="#ffd563" />
          <path d="M4 18.5V11.5Q4 10.5 5 10.5H17Q18 10.5 18 11.5V18.5H14V14H8.5V18.5Z" fill="#3c93d6" />
        </Icon>
      </TaskButton>
      <TaskButton $w={40} $ml={9} $open>
        <Icon w={24} h={24} stroke="none">
          <circle cx="12" cy="12" r="12" fill="#fbc116" />
          <path d="M12 12L1.6 6A12 12 0 0 1 22.4 6H12Z" fill="#e53a2e" />
          <path d="M12 6L1.6 6A12 12 0 0 0 11 24L17.2 15L12 12Z" fill="#28a045" />
          <path d="M1.6 6A12 12 0 0 1 22.4 6H12A6 6 0 0 0 6.8 9V15Z" fill="#e53a2e" />
          <circle cx="12" cy="12" r="5.8" fill="#fff" /><circle cx="12" cy="12" r="4.6" fill="#2f74e8" />
        </Icon>
      </TaskButton>
      <TaskButton $w={40} $ml={9} $open>
        <Icon w={23} h={19} mt={-2} stroke="none">
          <defs>
            <linearGradient id="sky" x1="0" y1="0" x2="0" y2="1">
              <stop offset="0" stopColor="#2c8fdc" /><stop offset=".5" stopColor="#c9ebf7" /><stop offset=".6" stopColor="#2e6b66" /><stop offset="1" stopColor="#6aa9b0" />
            </linearGradient>
          </defs>
          <path d="M1 1.5H22V17.5H1Z" fill="#d5e6ef" /><path d="M2.5 3H20.5V16H2.5Z" fill="url(#sky)" />
          <path d="M3 11C7 8.5 10 9.5 20 12.5L12 14Z" fill="#275b4d" />
          <path d="M.7 5V.7H5M18 .7H22.3V5M.7 14V18.3H5M22.3 14V18.3H18" fill="none" stroke="#357fc4" strokeWidth="1.5" />
        </Icon>
      </TaskButton>
      <TaskButton $w={40} $ml={9} $open>
        <Icon w={23} h={24} stroke="none">
          <path d="M8 3C10 0 15 -1 17 3C21 4 23 9 22 13C21.8 16 20.5 17.5 20 20L18.5 23H14.5L14 19H11L10.5 23.5H6.5L7 18C5 17 4.2 15.5 4.4 14C4 17 5 20 3.2 22H1C1.8 18 .3 15 .5 11C.7 7 3.5 3.5 8 3Z" fill="#1da9e0" />
          <path d="M7 4C11 4 12 10 9 15M16 4C18 7 18 10 17 13" fill="none" stroke="#0c86bb" strokeWidth="1" />
          <path d="M2.6 13L6 16L4 17.5Z" fill="#fff" />
        </Icon>
      </TaskButton>
      <TaskButton $w={40} $ml={9} $open>
        <Icon w={24} h={24} stroke="none">
          <path d="M18 0L24 2.6V21.4L18 24Z" fill="#26a8f2" />
          <path d="M18 0V6.5L3 18.2L1.8 18.2L0 16.5V15.2L17 .3Z" fill="#0a71b8" />
          <path d="M0 8.6V7.4L1.8 5.8H3L18 17.5V24L17 23.7Z" fill="#148bd6" />
        </Icon>
      </TaskButton>
      <TaskButton $w={40} $ml={9} $open>
        <Icon w={24} h={22} stroke="none">
          <path d="M7 0H24V22H7Z" fill="#21a366" /><path d="M15.5 0H24V5.5H15.5Z" fill="#33c481" />
          <path d="M6 11H24V16.5H6Z" fill="#107c41" /><path d="M6 16.5H24V22H6Z" fill="#185c37" /><path d="M6 5.5H15.5V11H6Z" fill="#107c41" opacity=".6" />
          <path d="M0 5H12V17.5H0Z" fill="#107c41" /><AppLetter x="2.7" y="15">X</AppLetter>
        </Icon>
      </TaskButton>
      <TaskButton $w={48} $ml={5} $open $active>
        <Icon w={24} h={22} stroke="none">
          <path d="M6 0H24V5.5H6Z" fill="#41a5ee" /><path d="M6 5.5H24V11H6Z" fill="#2b7cd3" /><path d="M6 11H24V16.5H6Z" fill="#185abd" />
          <path d="M6 16.5H24V22H6Z" fill="#103f91" /><path d="M0 5H12V17.5H0Z" fill="#185abd" /><AppLetter x="1" y="15">W</AppLetter>
        </Icon>
      </TaskButton>
      <Spacer />
      <Tray>
        <Icon w={12} h={7} stroke="#111" strokeWidth="1.3"><path d="M.5 6.5L6 1L11.5 6.5" /></Icon>
        <Icon w={13} h={16} ml={12} stroke="#111" strokeWidth="1.2">
          <path d="M2.5 1.5Q6.5 -.7 10.5 1.5M2.5 14.5Q6.5 16.7 10.5 14.5 M3 4H7Q8.5 4 8.5 5.5V10.5Q8.5 12 7 12H3Q1.5 12 1.5 10.5V5.5Q1.5 4 3 4Z M8.5 7L11.5 5V11L8.5 9" />
        </Icon>
        <Icon w={17} h={14} ml={9} mt={1} stroke="#111" strokeWidth="1.1">
          <path d="M4.5 1.5H15.5V10.5H3.5V5.5M.5 1.5H4.5V5.5H.5Z M2.5 5.5V10M8.5 10.5V13M5.5 13.3H13" />
        </Icon>
        <Icon w={17} h={15} ml={7} mt={1} stroke="#111" strokeWidth="1.1">
          <path d="M.5 4.5H2.5L6 1V12L2.5 8.5H.5Z" />
          <circle cx="12" cy="10.3" r="4.6" fill="#dc2331" stroke="none" /><path d="M10.2 8.5L13.8 12.1M13.8 8.5L10.2 12.1" stroke="#fff" />
        </Icon>
        <Clock>
          <Text w={42}>1:21 AM</Text>
          <Text w={52} $mt={2}>9/24/2024</Text>
        </Clock>
        <DeskEdge />
      </Tray>
    </Taskbar>
  );
}

export default function App() {
  return (
    <Window>
      <Global />
      <TitleBarView />
      <Tabs />
      <Ribbon>
        <Clipboard />
        <FontGroup />
        <Paragraph />
        <Styles />
        <Editing />
        <Collapse>
          <Icon w={11} h={6} strokeWidth="1.2"><path d="M.7 5.5L5.5 .9L10.3 5.5" /></Icon>
        </Collapse>
      </Ribbon>
      <Document />
      <Status />
      <TaskbarView />
    </Window>
  );
}
